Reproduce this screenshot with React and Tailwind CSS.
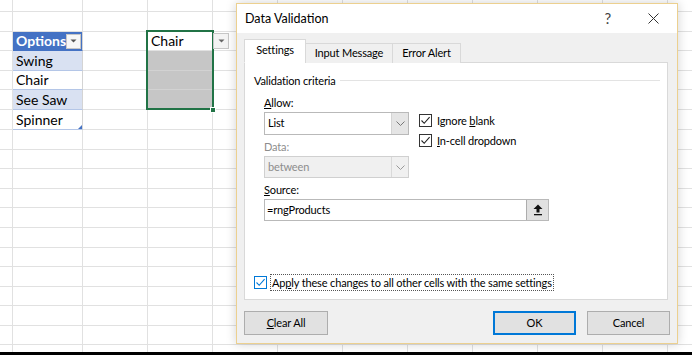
import React from "react";

const rowH = [12, 20, 19, 20, 19, 20, 20, 20, 19, 20, 19, 20, 20, 19, 20, 19, 20, 19];
const colW = [13, 70, 65, 65, 65, 65, 65, 65, 65, 65, 65, 65];

function FilterBtn() {
  return (
    <div className="w-[15px] h-[15px] bg-[#f7f7f7] border border-[#c6c6c6] flex items-center justify-center mr-px">
      <svg width="7" height="4" viewBox="0 0 7 4"><path d="M0.5 0.5 L6.5 0.5 L3.5 3.5 Z" fill="#555" /></svg>
    </div>
  );
}

function Cell({ r, c, w, h }) {
  let cls = "border-r border-b border-[#e1e1e1] bg-white";
  let content = null;
  const txt = "font-['Lato',sans-serif] text-[14px] leading-none text-black pl-[3px]";
  if (c === 1 && r >= 2 && r <= 6) {
    if (r === 2) {
      cls = "border-r border-b border-r-[#d4d4d4] border-b-[#4472c4] bg-[#4472c4]";
      content = (
        <div className="flex items-center justify-between h-full">
          <span className="font-['Lato',sans-serif] text-[14px] leading-none font-bold text-white pl-[3px]">Options</span>
          <FilterBtn />
        </div>
      );
    } else {
      const band = r === 3 || r === 5;
      cls = `border-r border-b border-r-[#d4d4d4] border-b-[#b4c6e7] ${band ? "bg-[#d9e1f2]" : "bg-white"}`;
      const label = { 3: "Swing", 4: "Chair", 5: "See Saw", 6: "Spinner" }[r];
      content = (
        <div className="relative flex items-center h-full">
          <span className={txt}>{label}</span>
          {r === 6 && (
            <svg className="absolute right-0 bottom-0" width="4" height="4" viewBox="0 0 4 4"><path d="M4 0 L4 4 L0 4 Z" fill="#4472c4" /></svg>
          )}
        </div>
      );
    }
  }
  if (c === 3 && r >= 2 && r <= 5) {
    if (r === 2) {
      content = (
        <div className="flex items-center h-full">
          <span className={txt}>Chair</span>
        </div>
      );
    } else {
      cls = "border-r border-b border-r-[#e1e1e1] border-b-[#d2d2d2] bg-[#c6c6c6]";
    }
  }
  return (
    <div className={`shrink-0 ${cls}`} style={{ width: w, height: h }}>
      {content}
    </div>
  );
}

function Check({ blue }) {
  return (
    <div className={`w-[13px] h-[13px] bg-white border ${blue ? "border-[#0078d7]" : "border-[#333]"} flex items-center justify-center shrink-0`}>
      <svg width="11" height="11" viewBox="0 0 11 11">
        <path d="M1.5 5.5 L4.2 8.3 L9.6 2.2" fill="none" stroke={blue ? "#0078d7" : "#222"} strokeWidth="1.1" />
      </svg>
    </div>
  );
}

function Chevron({ color }) {
  return (
    <svg width="9" height="5" viewBox="0 0 9 5">
      <path d="M0.5 0.5 L4.5 4.5 L8.5 0.5" fill="none" stroke={color} strokeWidth="1" />
    </svg>
  );
}

export default function App() {
  const f = "font-['Lato',sans-serif]";
  return (
    <div className="relative w-[692px] h-[355px] overflow-hidden bg-white">
      {/* spreadsheet grid */}
      <div className="flex flex-col">
        {rowH.map((h, r) => (
          <div key={r} className="flex">
            {colW.map((w, c) => (
              <Cell key={c} r={r} c={c} w={w} h={h} />
            ))}
          </div>
        ))}
        <div className="flex h-[7px]">
          {colW.map((w, c) => (
            <div key={c} className="shrink-0 border-r border-[#e1e1e1]" style={{ width: w }} />
          ))}
        </div>
        <div className="h-[3px] bg-black" />
      </div>

      {/* selection overlay */}
      <div className="absolute left-[146px] top-[30px] w-[68px] h-[80px] border-2 border-[#217346]" />
      <div className="absolute left-[210px] top-[107px] w-[6px] h-[6px] bg-[#217346] border border-white" />
      <div className="absolute left-[213px] top-[33px] w-[16px] h-[16px] bg-[#f3f3f3] border border-[#c6c6c6] flex items-center justify-center">
        <svg width="7" height="4" viewBox="0 0 7 4"><path d="M0.5 0.5 L6.5 0.5 L3.5 3.5 Z" fill="#666" /></svg>
      </div>

      {/* dialog */}
      <div className={`absolute left-[236px] top-[3px] w-[442px] h-[341px] border border-[#ecd08f] bg-[#f0f0f0] flex flex-col shadow-[0_0_10px_rgba(0,0,0,0.18)] ${f} text-[11px] tracking-[-0.15px] text-black`}>
        <div className="h-[29px] bg-white flex items-center pl-[8px] shrink-0">
          <span className="text-[12.5px] tracking-normal text-black leading-none pt-px">Data Validation</span>
          <span className="ml-auto text-[15px] leading-none text-[#444]">?</span>
          <svg className="ml-[37px] mr-[18px]" width="11" height="11" viewBox="0 0 11 11">
            <path d="M0.5 0.5 L10.5 10.5 M10.5 0.5 L0.5 10.5" stroke="#333" strokeWidth="1" />
          </svg>
        </div>
        <div className="flex flex-col px-[7px] pt-[7px]">
          {/* tabs */}
          <div className="flex items-end h-[23px] -mb-px relative z-10">
            <div className="w-[62px] h-[24px] bg-white border border-[#d9d9d9] border-b-white flex items-center justify-center pb-px">
              Settings
            </div>
            <div className="-ml-px w-[88px] h-[20px] bg-[#f0f0f0] border border-[#d9d9d9] border-b-0 flex items-center justify-center">
              Input Message
            </div>
            <div className="-ml-px w-[69px] h-[20px] bg-[#f0f0f0] border border-[#d9d9d9] border-b-0 flex items-center justify-center">
              Error Alert
            </div>
          </div>
          {/* panel */}
          <div className="w-[424px] h-[238px] bg-white border border-[#d9d9d9] flex flex-col pl-[9px] pt-[9px] pb-[8px]">
            <div className="flex items-center h-[16px]">
              <span className="leading-none">Validation criteria</span>
              <div className="flex-1 h-px bg-[#e3e3e3] ml-[4px] mr-[7px]" />
            </div>
            <div className="pl-[10px] flex flex-col">
              <div className="flex">
                <div className="flex flex-col w-[145px]">
                  <div className="mt-[6px] h-[16px] flex items-center leading-none">
                    <span><span className="underline">A</span>llow:</span>
                  </div>
                  <div className="mt-[2px] h-[23px] border border-[#b9b9b9] bg-white flex">
                    <div className="flex-1 flex items-center pl-[3px]">List</div>
                    <div className="w-[17px] bg-[#e5e5e5] border-l border-[#d4d4d4] flex items-center justify-center">
                      <Chevron color="#777" />
                    </div>
                  </div>
                  <div className="mt-[3px] h-[16px] flex items-center leading-none text-[#8d8d8d]">Data:</div>
                  <div className="mt-[2px] h-[22px] border border-[#d0d0d0] bg-[#f0f0f0] flex text-[#8d8d8d]">
                    <div className="flex-1 flex items-center pl-[3px]">between</div>
                    <div className="w-[17px] border-l border-[#d9d9d9] flex items-center justify-center">
                      <Chevron color="#999" />
                    </div>
                  </div>
                </div>
                <div className="flex flex-col ml-[10px] pt-[26px] gap-[7px]">
                  <div className="flex items-center h-[13px] gap-[5px]">
                    <Check />
                    <span className="leading-none">Ignore <span className="underline">b</span>lank</span>
                  </div>
                  <div className="flex items-center h-[13px] gap-[5px]">
                    <Check />
                    <span className="leading-none"><span className="underline">I</span>n-cell dropdown</span>
                  </div>
                </div>
              </div>
              <div className="mt-[3px] h-[16px] flex items-center leading-none">
                <span><span className="underline">S</span>ource:</span>
              </div>
              <div className="mt-[2px] h-[22px] w-[285px] border border-[#b9b9b9] bg-white flex">
                <div className="flex-1 flex items-center pl-[2px]">=rngProducts</div>
                <div className="w-[22px] bg-[#e1e1e1] border-l border-[#adadad] flex items-center justify-center">
                  <svg width="10" height="12" viewBox="0 0 10 12">
                    <path d="M5 0.5 L9.5 5 L6.5 5 L6.5 8.5 L3.5 8.5 L3.5 5 L0.5 5 Z" fill="#111" />
                    <rect x="1" y="10" width="8" height="1.3" fill="#111" />
                  </svg>
                </div>
              </div>
            </div>
            <div className="flex-1" />
            <div className="flex items-center h-[17px]">
              <Check blue />
              <div className="ml-[3px] h-[17px] border border-dotted border-[#555] flex items-center px-[1px] leading-none">
                <span>A<span>p</span><span className="underline">p</span>ly these changes to all other cells with the same settings</span>
              </div>
            </div>
          </div>
          {/* buttons */}
          <div className="flex mt-[11px] h-[24px]">
            <div className="w-[84px] h-[24px] bg-[#e1e1e1] border border-[#adadad] flex items-center justify-center">
              <span><span className="underline">C</span>lear All</span>
            </div>
            <div className="ml-auto w-[83px] h-[24px] bg-[#e1e1e1] border-2 border-[#0078d7] flex items-center justify-center">OK</div>
            <div className="ml-[11px] w-[83px] h-[24px] bg-[#e1e1e1] border border-[#adadad] flex items-center justify-center">Cancel</div>
          </div>
        </div>
      </div>
    </div>
  );
}
